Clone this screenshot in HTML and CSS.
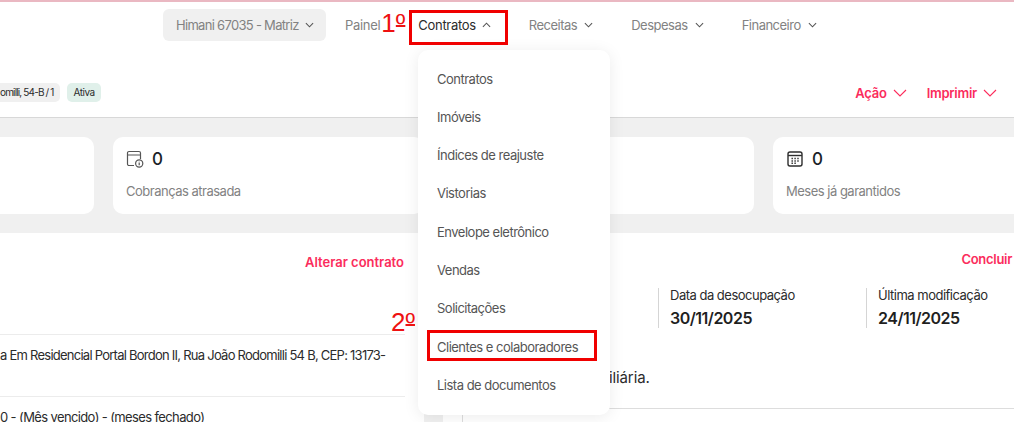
FILE: index.html
```html
<!DOCTYPE html>
<html lang="en">
<head>
    <meta charset="UTF-8">
    <title>Contratos</title>
    <link rel="stylesheet" href="styles.css">
</head>
<body>
    <header class="top-nav">
        <div class="company-select">
            <span class="company-name">Himani 67035 - Matriz</span>
            <svg class="chev" viewBox="0 0 10 6"><path d="M1 1l4 4 4-4"/></svg>
        </div>
        <a class="nav-link">Painel</a>
        <span class="step-label step-one">1<span class="ord">º</span></span>
        <a class="nav-link nav-active">Contratos
            <svg class="chev" viewBox="0 0 10 6"><path d="M1 5l4-4 4 4"/></svg>
        </a>
        <a class="nav-link nav-spaced">Receitas
            <svg class="chev" viewBox="0 0 10 6"><path d="M1 1l4 4 4-4"/></svg>
        </a>
        <a class="nav-link nav-spaced">Despesas
            <svg class="chev" viewBox="0 0 10 6"><path d="M1 1l4 4 4-4"/></svg>
        </a>
        <a class="nav-link nav-spaced">Financeiro
            <svg class="chev" viewBox="0 0 10 6"><path d="M1 1l4 4 4-4"/></svg>
        </a>
    </header>

    <section class="title-row">
        <div class="tags">
            <span class="tag tag-address">omilli, 54-B / 1</span>
            <span class="tag tag-status">Ativa</span>
        </div>
        <div class="actions">
            <a class="action">Ação <svg class="chev-big" viewBox="0 0 14 8"><path d="M1 1l6 6 6-6"/></svg></a>
            <a class="action">Imprimir <svg class="chev-big" viewBox="0 0 14 8"><path d="M1 1l6 6 6-6"/></svg></a>
        </div>
    </section>

    <section class="stats">
        <div class="card card-first"></div>
        <div class="card">
            <div class="card-top">
                <svg class="card-icon" viewBox="0 0 18 18">
                    <path d="M8 15.5H3a1.5 1.5 0 0 1-1.5-1.5V3A1.5 1.5 0 0 1 3 1.5h10A1.5 1.5 0 0 1 14.500 3v6M1.500 5h13"/>
                    <circle cx="13.200" cy="13.500" r="3.600"/>
                    <path d="M13.200 12.600v2.600M13.200 11.400v.3"/>
                </svg>
                <span class="card-num">0</span>
            </div>
            <p class="card-label">Cobranças atrasada</p>
        </div>
        <div class="card"></div>
        <div class="card card-last">
            <div class="card-top">
                <svg class="card-icon icon-dark" viewBox="0 0 18 18">
                    <rect x="2" y="2" width="14" height="14" rx="2"/>
                    <path d="M2 5.500h14"/>
                    <path class="dots" d="M5.500 8.500h1.400M8.400 8.500h1.400M11.300 8.500h1.400M5.500 11h1.400M8.400 11h1.400M11.300 11h1.400M5.500 13.300h1.400M8.400 13.300h1.400"/>
                </svg>
                <span class="card-num">0</span>
            </div>
            <p class="card-label">Meses já garantidos</p>
        </div>
    </section>

    <main class="panels">
        <div class="panel-left">
            <div class="panel-left-head"><a class="link-red link-wide">Alterar contrato</a></div>
            <div class="info-row">a Em Residencial Portal Bordon II, Rua João Rodomilli 54 B, CEP: 13173-</div>
            <div class="info-row info-rent">0 - (Mês vencido) - (meses fechado)</div>
        </div>
        <div class="panel-right">
            <div class="panel-body">
                <div class="panel-right-head"><a class="link-red">Concluir</a></div>
                <div class="dates">
                    <div class="date-col">
                        <span class="date-label">Data da desocupação</span>
                        <strong class="date-value">30/11/2025</strong>
                    </div>
                    <div class="date-col">
                        <span class="date-label">Última modificação</span>
                        <strong class="date-value">24/11/2025</strong>
                    </div>
                </div>
                <p class="note">Contrato da imobiliária.</p>
            </div>
        </div>
    </main>

    <nav class="dropdown">
        <a class="drop-item">Contratos</a>
        <a class="drop-item">Imóveis</a>
        <a class="drop-item">Índices de reajuste</a>
        <a class="drop-item">Vistorias</a>
        <a class="drop-item">Envelope eletrônico</a>
        <a class="drop-item">Vendas</a>
        <a class="drop-item">Solicitações</a>
        <a class="drop-item">Clientes e colaboradores</a>
        <a class="drop-item">Lista de documentos</a>
    </nav>

    <div class="mark mark-nav"></div>
    <div class="mark mark-item"></div>
    <span class="step-label step-two">2<span class="ord">º</span></span>
</body>
</html>
```

FILE: styles.css
```css
* {
    margin: 0;
    padding: 0;
    box-sizing: border-box;
}

html, body {
    height: 422px;
    overflow: hidden;
}

body {
    position: relative;
    font-family: 'Inter', 'Liberation Sans', sans-serif;
    font-size: 13px;
    letter-spacing: -0.5px;
    background-color: #ffffff;
    color: #2b2b2b;
}

/* top navigation */
.top-nav {
    display: flex;
    align-items: center;
    height: 41px;
    padding-left: 163px;
    padding-top: 6px;
    border-top: 2px solid #eab8c2;
}

.company-select {
    display: flex;
    align-items: center;
    gap: 6px;
    width: 163px;
    height: 32px;
    padding-left: 13px;
    margin-right: 19px;
    background-color: #f0f0f0;
    border-radius: 6px;
    color: #828282;
}

.company-name {
    letter-spacing: -0.7px;
}

.nav-link {
    display: flex;
    align-items: center;
    gap: 7px;
    letter-spacing: -0.3px;
    color: #828282;
}

.nav-active {
    gap: 6px;
    margin-left: 13px;
    color: #2b2b2b;
}

.nav-spaced {
    margin-left: 38px;
    letter-spacing: -0.5px;
}

.chev {
    width: 9px;
    height: 6px;
    fill: none;
    stroke: #555555;
    stroke-width: 1.2;
}

.step-label {
    font-family: 'Liberation Sans', sans-serif;
    font-size: 26px;
    line-height: 28px;
    letter-spacing: 0;
    color: #ee1111;
}

.ord {
    text-decoration: underline;
    text-decoration-thickness: 1.5px;
    text-decoration-skip-ink: none;
    text-underline-offset: -7px;
}

.step-one {
    margin-left: 1px;
    margin-top: -4px;
}

.step-two {
    position: absolute;
    left: 391px;
    top: 308px;
}

/* title row */
.title-row {
    display: flex;
    justify-content: space-between;
    align-items: center;
    height: 77px;
    padding: 42px 17px 15px 0;
    border-bottom: 1px solid #d8d8d8;
}

.tags {
    display: flex;
    gap: 7px;
}

.tag {
    padding: 0 6px;
    height: 19px;
    line-height: 19px;
    font-size: 10px;
    border-radius: 5px;
    white-space: nowrap;
}

.tag-address {
    width: 60px;
    padding-left: 0;
    letter-spacing: -0.85px;
    background-color: #f0f0f0;
    border-radius: 0 5px 5px 0;
}

.tag-status {
    padding: 0 6.5px;
    background-color: #e0f0ea;
}

.actions {
    display: flex;
    gap: 20px;
}

.action {
    display: flex;
    align-items: center;
    gap: 6px;
    font-weight: 600;
    letter-spacing: -0.25px;
    color: #fb2c5c;
}

.chev-big {
    width: 14px;
    height: 8px;
    fill: none;
    stroke: #fb2c5c;
    stroke-width: 1.1;
}

/* stat cards */
.stats {
    display: grid;
    grid-template-columns: 94px 311px 311px 241px;
    gap: 19px;
    height: 115px;
    padding-top: 19px;
    background-color: #f0f0f0;
}

.card {
    height: 77px;
    padding: 11px 13px;
    background-color: #ffffff;
    border-radius: 10px;
}

.card-first {
    border-radius: 0 10px 10px 0;
}

.card-last {
    border-radius: 10px 0 0 10px;
}

.card-top {
    display: flex;
    align-items: center;
    gap: 8px;
    height: 22px;
}

.card-icon {
    width: 18px;
    height: 18px;
    fill: none;
    stroke: #555555;
    stroke-width: 1.2;
}

.icon-dark {
    stroke: #2f2f2f;
    stroke-width: 1.4;
}

.card-num {
    font-size: 17px;
    font-weight: 500;
    color: #1b1f27;
}

.card-label {
    margin-top: 13px;
    color: #828282;
}

/* lower panels */
.panels {
    display: flex;
    height: 189px;
    overflow: hidden;
    background-color: #f0f0f0;
}

.panel-left {
    width: 424px;
    padding: 21px 19px 0 0;
    background-color: #ffffff;
}

.panel-left-head {
    display: flex;
    justify-content: flex-end;
    height: 80px;
    padding-right: 1px;
}

.link-red {
    font-weight: 600;
    letter-spacing: -0.3px;
    color: #fb2c5c;
}

.link-wide {
    letter-spacing: 0;
}

.info-row {
    height: 62px;
    padding-top: 12px;
    line-height: 16px;
    letter-spacing: -0.75px;
    white-space: nowrap;
    border-top: 1px solid #ececec;
}

.info-rent {
    letter-spacing: -0.62px;
}

.panel-right {
    width: 571px;
    margin-left: 19px;
    padding: 0 2px 0 19px;
    background-color: #ffffff;
}

.panel-body {
    height: 100%;
    padding-top: 18px;
    border-left: 1px solid #dddddd;
}

.panel-right-head {
    display: flex;
    justify-content: flex-end;
    height: 37px;
}

.dates {
    display: flex;
    margin-left: 195px;
}

.date-col {
    display: flex;
    flex: none;
    flex-direction: column;
    gap: 6px;
    width: 208px;
    height: 40px;
    padding-left: 11px;
    border-left: 1px solid #d5d5d5;
}

.date-label {
    line-height: 15px;
}

.date-value {
    font-size: 16px;
    line-height: 19px;
    font-weight: 600;
    color: #1f1f1f;
}

.note {
    margin-top: 41px;
    margin-right: -2px;
    padding: 0 0 21px 25px;
    font-size: 15px;
    line-height: 18px;
    letter-spacing: -0.1px;
    border-bottom: 1px solid #dddddd;
}

/* open menu */
.dropdown {
    position: absolute;
    left: 418px;
    top: 50px;
    display: flex;
    flex-direction: column;
    width: 192px;
    height: 365px;
    padding-top: 9.5px;
    background-color: #ffffff;
    border-radius: 10px;
    box-shadow: 0 2px 16px rgba(0, 0, 0, 0.08);
}

.drop-item {
    display: block;
    height: 38.3px;
    line-height: 38.3px;
    padding-left: 19px;
    color: #555555;
}

/* red annotation boxes */
.mark {
    position: absolute;
    border: 3px solid #f00000;
}

.mark-nav {
    left: 409px;
    top: 10px;
    width: 99px;
    height: 35px;
}

.mark-item {
    left: 427px;
    top: 330px;
    width: 170px;
    height: 31px;
}
```
